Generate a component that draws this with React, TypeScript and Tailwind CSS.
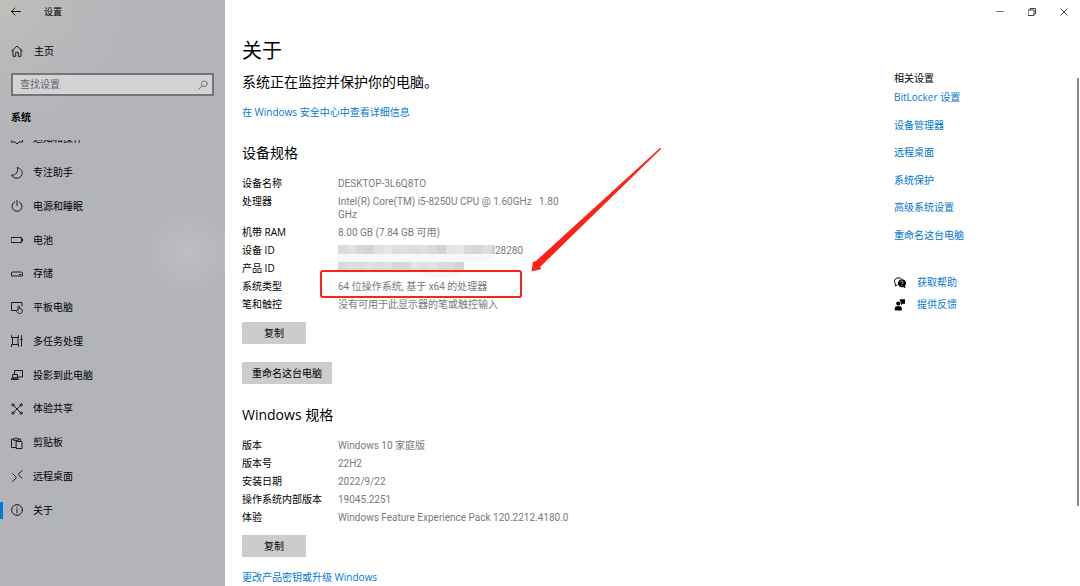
import type { ReactNode } from "react";

type Spec = { label: string; value: ReactNode };

const line = {
  fill: "none",
  stroke: "#1c1c1e",
  strokeWidth: 1,
  strokeLinecap: "round",
  strokeLinejoin: "round",
} as const;

function Icon({ children }: { children: ReactNode }) {
  return (
    <svg viewBox="0 0 12 12" className="size-3 shrink-0" aria-hidden="true" {...line}>
      {children}
    </svg>
  );
}

const navItems: { label: string; icon: ReactNode; current?: boolean }[] = [
  { label: "通知和操作", icon: <path d="M.5 .5h11v8.500h-3.500l-2 2-2-2h-3.500z" /> },
  { label: "专注助手", icon: <path d="M6.500 .7c1 4-1.500 7.800-6 7.500 2 4 9 4.200 10.500-.7.900-3-1.200-6-4.500-6.800z" /> },
  {
    label: "电源和睡眠",
    icon: (
      <>
        <path d="M3.800 1.800a5 5 0 1 0 4.400 0" />
        <path d="M6 .5v5" />
      </>
    ),
  },
  {
    label: "电池",
    icon: (
      <>
        <path d="M.5 3.500h10v5h-10z" />
        <path d="M11.500 5v2" />
      </>
    ),
  },
  {
    label: "存储",
    icon: (
      <>
        <path d="M1.500 4h9l1 1v3h-11v-3z" />
        <path d="M8.500 6.500h1.200" />
      </>
    ),
  },
  {
    label: "平板电脑",
    icon: (
      <>
        <path d="M4.500 8.500h-4v-8h10.500v3.500" />
        <path d="M7 8v-3.300c0-1.200 1.500-1.200 1.500 0v1.800l1.800.5c.9.200 1.200.7 1.100 1.500-.2 1.900-.9 3-2.700 3-1.500 0-2.200-.6-3.200-2.200-.5-.9.500-1.700 1.500-1.300z" />
      </>
    ),
  },
  {
    label: "多任务处理",
    icon: (
      <>
        <path d="M.5 .5v2h7v-2M.5 11.500v-2h7v2M1.500 2.500v7M7 2.500v7" />
        <path d="M10.500 .8v10.400M9.700 4.500h1.600" />
      </>
    ),
  },
  {
    label: "投影到此电脑",
    icon: (
      <>
        <path d="M3.500 4.500v-3h8v6.500h-4" />
        <path d="M2 5.500h4.500v3.500h-4.500zM.5 10.500h7l-.8-1.500h-5.400z" />
      </>
    ),
  },
  {
    label: "体验共享",
    icon: (
      <>
        <path d="M2.500 2.500l7 7M9.500 2.500l-7 7" />
        <circle cx="1.900" cy="1.900" r="1.100" />
        <circle cx="10.100" cy="1.900" r="1.100" />
        <circle cx="1.900" cy="10.100" r="1.100" />
        <circle cx="10.100" cy="10.100" r="1.100" />
      </>
    ),
  },
  {
    label: "剪贴板",
    icon: (
      <>
        <path d="M5 10.500h-4.500v-8.500h2M7.500 2h2v2M2.700 3v-1h1.300a1 1 0 0 1 2-.2h1.300v1.200z" />
        <path d="M5.500 4.500h5.500v7h-5.500z" />
      </>
    ),
  },
  { label: "远程桌面", icon: <path d="M1.500 3.500l4 4-4 4M11 .8l-4 3.700 4 3.700" /> },
  {
    label: "关于",
    current: true,
    icon: (
      <>
        <circle cx="6" cy="6" r="5.400" />
        <path d="M6 5v4M6 3v.3" />
      </>
    ),
  },
];

const deviceSpecs: Spec[] = [
  { label: "设备名称", value: "DESKTOP-3L6Q8TO" },
  { label: "处理器", value: <span className="whitespace-pre-wrap">{"Intel(R) Core(TM) i5-8250U CPU @ 1.60GHz   1.80 GHz"}</span> },
  { label: "机带 RAM", value: "8.00 GB (7.84 GB 可用)" },
  {
    label: "设备 ID",
    value: (
      <span className="relative block pl-[157px]">
        <Mosaic />
        28280
      </span>
    ),
  },
  { label: "产品 ID", value: "" },
  {
    label: "系统类型",
    value: (
      <span className="relative block">
        64 位操作系统, 基于 x64 的处理器
        <span className="absolute -top-2.5 -left-[18px] h-7 w-[202px] rounded-[3px] border-2 border-[#fb2317]" />
        <Arrow />
      </span>
    ),
  },
  { label: "笔和触控", value: "没有可用于此显示器的笔或触控输入" },
];

const windowsSpecs: Spec[] = [
  { label: "版本", value: "Windows 10 家庭版" },
  { label: "版本号", value: "22H2" },
  { label: "安装日期", value: "2022/9/22" },
  { label: "操作系统内部版本", value: "19045.2251" },
  { label: "体验", value: "Windows Feature Experience Pack 120.2212.4180.0" },
];

const related = ["BitLocker 设置", "设备管理器", "远程桌面", "系统保护", "高级系统设置", "重命名这台电脑"];

const tilesTop = ["#dadada", "#e0e0e0", "#d8d8d8", "#d4d4d4", "#e0e0e0", "#e6e6e6", "#dedede", "#dfdfdf", "#dcdcdc", "#dfdfdf", "#d9d9d9", "#d2d2d2", "#e3e3e3", "#e8e8e8", "#d9d9d9", "#d5d5d5", "#dedede", "#d3d3d3"];
const tilesBottom = ["#dadada", "#dedede", "#dcdcdc", "#e0e0e0", "#dcdcdc", "#dfdfdf", "#d6d6d6", "#d8d8d8", "#e3e3e3", "#dedede", "#e2e2e2", "#dbdbdb", "#dadada", "#d2d2d2"];

function Mosaic() {
  return (
    <svg viewBox="0 0 157 40" className="absolute -top-1 left-0 h-10 w-[157px]" aria-hidden="true">
      <path d="M0 12h157v3q-2 6-10 6h-21v11q-8 6-24 6-16 0-20-8h-82z" fill="#f8f8f8" />
      {tilesTop.map((fill, i) => (
        <rect key={i} x={i * 9} y="5" width="9" height="9" fill={fill} />
      ))}
      {tilesBottom.map((fill, i) => (
        <rect key={i} x={i * 9} y="22" width="9" height="9" fill={fill} />
      ))}
    </svg>
  );
}

function Arrow() {
  return (
    <svg viewBox="0 0 130 124" className="absolute -top-[132px] left-[193px] h-[124px] w-[130px]" aria-hidden="true">
      <path d="M130 0L129 0 5 113 2 114 .500 123.500 10.500 121 9 119 130 1z" fill="#fb2317" />
    </svg>
  );
}

function SpecTable({ rows, name }: { rows: Spec[]; name: string }) {
  return (
    <table aria-label={name} className="w-[332px] table-fixed border-collapse text-left">
      <tbody>
        {rows.map((row) => (
          <tr key={row.label}>
            <th scope="row" className="w-24 pt-0.5 pb-[3px] align-top font-normal whitespace-nowrap">
              {row.label}
            </th>
            <td className="pt-0.5 pb-[3px] align-top font-['Roboto','Noto_Sans_CJK_SC',sans-serif] text-[#7a7a7a]">
              {row.value}
            </td>
          </tr>
        ))}
      </tbody>
    </table>
  );
}

function PushButton({ children }: { children: ReactNode }) {
  return (
    <button type="button" className="block h-[22px] min-w-16 bg-[#cccccc] px-2.5 text-center">
      {children}
    </button>
  );
}

function TextLink({ children }: { children: ReactNode }) {
  return (
    <a href="#" className="text-[#0078d7]">
      {children}
    </a>
  );
}

function Sidebar() {
  return (
    <aside className="flex w-[225px] shrink-0 flex-col bg-[#b3b4b9] bg-[radial-gradient(circle_at_188px_253px,#bdbec3_0,#b3b4b900_45px),radial-gradient(circle_at_0_0,#c1bfba_0,#b9b9bb_60px,#b3b4b9_150px)]">
      <div className="flex h-[23px] items-center pl-2.5 text-[9px]">
        <button type="button" aria-label="返回" className="mr-[22px]">
          <Icon>
            <path d="M10.500 5.500h-9M5 2l-3.500 3.500 3.500 3.500" />
          </Icon>
        </button>
        设置
      </div>
      <a href="#" className="mt-[18px] flex h-5 items-center gap-[11px] pl-[11px]">
        <Icon>
          <path d="M.7 6l5.300-5 5.300 5M2 5v6.300h2.700v-4h2.600v4h2.700v-6.300" />
        </Icon>
        主页
      </a>
      <div className="mt-3 mr-[11px] ml-[11px] flex h-[23px] items-center border-2 border-[#76767a] bg-[#d3d3d5] pr-1 pl-[7px]">
        <input
          type="text"
          aria-label="查找设置"
          placeholder="查找设置"
          className="min-w-0 flex-1 bg-transparent outline-none placeholder:text-[#66666a]"
        />
        <svg viewBox="0 0 12 12" className="size-2.5" aria-hidden="true" {...line} stroke="#66666a">
          <circle cx="7.500" cy="4.500" r="3.500" />
          <path d="M5 7l-4.200 4.200" />
        </svg>
      </div>
      <h2 className="mt-[15px] ml-[11px] font-bold">系统</h2>
      <nav className="mt-4 min-h-0 flex-1 overflow-hidden">
        <ul className="-mt-[18px] flex h-[405px] flex-col">
          {navItems.map((item) => (
            <li key={item.label} className="flex flex-1">
              <a href="#" aria-current={item.current ? "page" : undefined} className="flex flex-1 items-center">
                <span className={item.current ? "h-[17px] w-[3px] bg-[#0078d7]" : "w-[3px]"} />
                <span className="flex items-center gap-2.5 pl-2">
                  <Icon>{item.icon}</Icon>
                  {item.label}
                </span>
              </a>
            </li>
          ))}
        </ul>
      </nav>
    </aside>
  );
}

function WindowControls() {
  return (
    <div className="flex h-[23px] shrink-0 justify-end">
      <button type="button" aria-label="最小化" className="flex w-8 items-center justify-center">
        <svg viewBox="0 0 8 8" className="size-2" {...line} stroke="#777">
          <path d="M.5 3.500h7" />
        </svg>
      </button>
      <button type="button" aria-label="还原" className="flex w-8 items-center justify-center">
        <svg viewBox="0 0 8 8" className="size-2" {...line} stroke="#444">
          <path d="M.5 2h5.500v5.500h-5.500zM2 1.800v-1.300h5.500v5.500h-1.300" />
        </svg>
      </button>
      <button type="button" aria-label="关闭" className="flex w-8 items-center justify-center">
        <svg viewBox="0 0 8 8" className="size-2" {...line} stroke="#444">
          <path d="M.7 .7l6.600 6.600M7.300 .7l-6.600 6.600" />
        </svg>
      </button>
    </div>
  );
}

function Related() {
  return (
    <section className="w-[170px] shrink-0 pt-[49px]">
      <h2>相关设置</h2>
      <ul className="mt-1.5 flex h-[151px] flex-col justify-between">
        {related.map((label) => (
          <li key={label}>
            <TextLink>{label}</TextLink>
          </li>
        ))}
      </ul>
      <ul className="mt-[34px] flex flex-col gap-[9px]">
        <li className="flex items-center gap-[11px]">
          <svg viewBox="0 0 12 12" className="size-3" aria-hidden="true">
            <path d="M4.500 .8C2 .8 .500 2.500 .500 4.500c0 1.200.5 2 1.200 2.700L1.200 9l2.200-1" fill="none" stroke="#000" strokeWidth="1" />
            <path d="M4.500 .8c1.500 0 2.500.5 3.200 1.400" fill="none" stroke="#000" strokeWidth="1" />
            <path d="M7.700 2.200a4 4 0 1 0 1.500 7.800l2.300 1.300-.5-2.500a4 4 0 0 0-3.300-6.600z" fill="#000" />
            <path d="M6.400 5.200c0-1.700 2.700-1.600 2.700 0 0 1-1.300 1-1.300 2M7.800 8v.8" fill="none" stroke="#fff" strokeWidth=".7" />
          </svg>
          <TextLink>获取帮助</TextLink>
        </li>
        <li className="flex items-center gap-[11px]">
          <svg viewBox="0 0 12 12" className="size-3" aria-hidden="true">
            <circle cx="4.300" cy="4.600" r="2.100" />
            <path d="M.800 11.500V9.300q0-2 2-2h3q2 0 2 2v2.200z" />
            <path d="M5.500 .200h5.500v4.500H8.800L7.200 6.200V4.500L6.500 2.800z" />
          </svg>
          <TextLink>提供反馈</TextLink>
        </li>
      </ul>
    </section>
  );
}

export default function App() {
  return (
    <div className="flex h-screen overflow-hidden bg-white font-['Open_Sans','Noto_Sans_CJK_SC',sans-serif] text-[10px] leading-[13px] text-black">
      <Sidebar />
      <div className="flex min-w-0 flex-1 flex-col">
        <WindowControls />
        <div className="flex min-h-0 flex-1">
          <main className="min-w-0 flex-1 pt-3.5 pl-[17px]">
            <h1 className="text-[20px] leading-7">关于</h1>
            <p className="mt-[7px] text-[14px] leading-5">系统正在监控并保护你的电脑。</p>
            <p className="mt-3.5">
              <TextLink>在 Windows 安全中心中查看详细信息</TextLink>
            </p>
            <h2 className="mt-6 text-[14px] leading-5">设备规格</h2>
            <div className="mt-3">
              <SpecTable name="设备规格" rows={deviceSpecs} />
            </div>
            <div className="mt-2 flex flex-col items-start gap-[18px]">
              <PushButton>复制</PushButton>
              <PushButton>重命名这台电脑</PushButton>
            </div>
            <h2 className="mt-[21px] text-[14px] leading-5">Windows 规格</h2>
            <div className="mt-3">
              <SpecTable name="Windows 规格" rows={windowsSpecs} />
            </div>
            <div className="mt-2">
              <PushButton>复制</PushButton>
            </div>
            <p className="mt-3.5">
              <TextLink>更改产品密钥或升级 Windows</TextLink>
            </p>
          </main>
          <Related />
          <div className="flex w-4 shrink-0 justify-end pt-[55px] pr-px">
            <div className="h-[428px] w-0.5 bg-[#8a8a8a]" />
          </div>
        </div>
      </div>
    </div>
  );
}
